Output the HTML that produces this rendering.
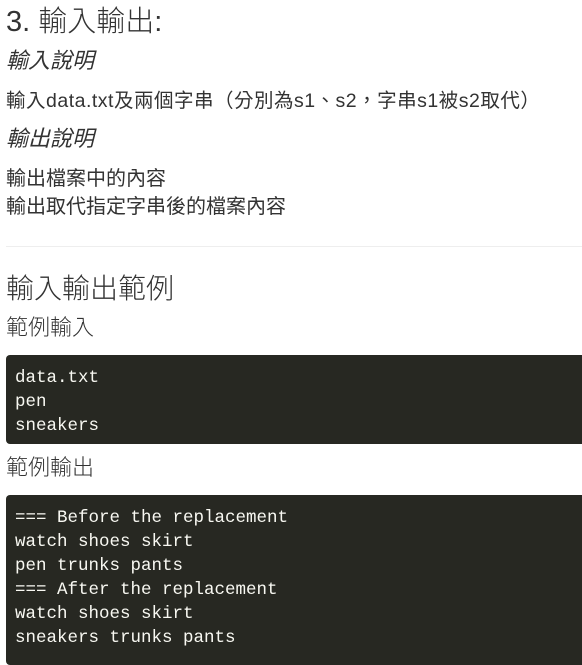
<!DOCTYPE html>
<html><head><meta charset="utf-8"><style>
body{margin:0;width:582px;height:657px;overflow:hidden;background:#fff;color:#333;font-family:"Liberation Sans","Noto Sans CJK TC",sans-serif;position:relative}
.a{position:absolute;left:6px;white-space:nowrap;line-height:1}
.i{font-style:italic}
pre{position:absolute;left:6px;width:600px;margin:0;background:#272822;color:#f8f8f2;border-radius:4px;font-family:"Liberation Mono","DejaVu Sans Mono",monospace;font-size:17.5px;line-height:24px;padding:11px 9px;box-sizing:border-box}
hr{position:absolute;left:6px;top:246px;width:600px;margin:0;border:0;border-top:1px solid #eee}
</style></head><body>
<div class="a" style="top:8px;font-size:29px;font-weight:300">3. 輸入輸出:</div>
<div class="a i" style="top:50px;font-size:22px">輸入說明</div>
<div class="a" style="top:92px;font-size:19.5px;letter-spacing:0.5px">輸入data.txt及兩個字串（分別為s1、s2，字串s1被s2取代）</div>
<div class="a i" style="top:128px;font-size:22px">輸出說明</div>
<div class="a" style="top:169px;font-size:20px">輸出檔案中的內容</div>
<div class="a" style="top:197px;font-size:20px">輸出取代指定字串後的檔案內容</div>
<hr>
<div class="a" style="top:275px;font-size:28px;font-weight:300">輸入輸出範例</div>
<div class="a" style="top:317px;font-size:22px;font-weight:300">範例輸入</div>
<pre style="top:355px;height:89px">data.txt
pen
sneakers</pre>
<div class="a" style="top:457px;font-size:22px;font-weight:300">範例輸出</div>
<pre style="top:495px;height:170px">=== Before the replacement
watch shoes skirt
pen trunks pants
=== After the replacement
watch shoes skirt
sneakers trunks pants</pre>
</body></html>
